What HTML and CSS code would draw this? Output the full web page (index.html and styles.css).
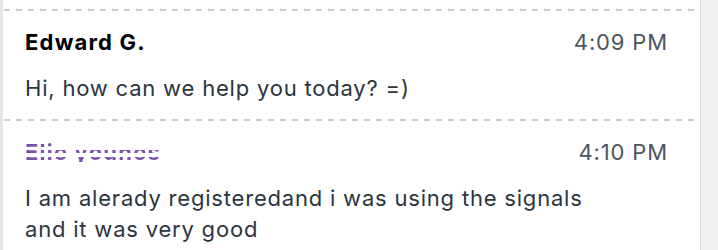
FILE: index.html
```html
<!DOCTYPE html>
<html lang="en">
<head>
<meta charset="utf-8">
<title>Chat</title>
<link rel="stylesheet" href="styles.css">
</head>
<body>
<div class="page">
  <div class="panel">
    <div class="message first">
      <div class="msg-head">
        <span class="author">Edward G.</span>
        <span class="time">4:09 PM</span>
      </div>
      <p class="msg-text">Hi, how can we help you today? =)</p>
    </div>
    <div class="message">
      <div class="msg-head">
        <span class="author author-striped">Elie younes</span>
        <span class="time">4:10 PM</span>
      </div>
      <p class="msg-text">I am alerady registeredand i was using the signals<br>and it was very good</p>
    </div>
  </div>
  <div class="track"></div>
</div>
</body>
</html>
```
FILE: styles.css
```css
html, body {
  margin: 0;
  padding: 0;
  height: 100%;
}
body {
  background: #f0f0f0;
  font-family: Inter, "Liberation Sans", Arial, sans-serif;
  overflow: hidden;
}
.page {
  display: flex;
  height: 250px;
}
.panel {
  width: 697px;
  background: #ffffff;
  border-left: 3px solid #e6e6e6;
  border-right: 1px solid #dedede;
  padding-top: 9px;
  box-sizing: content-box;
}
.track {
  flex: 1;
  background: #f0f0f0;
}
.message {
  padding: 18px 32px 14px 22px;
  background: repeating-linear-gradient(90deg, #cdcdcd 0 6px, transparent 6px 12px) left top / 100% 2px no-repeat;
  background-position: 1px 0;
}
.message.first {
  padding-bottom: 15px;
}
.msg-head {
  display: flex;
  justify-content: space-between;
  align-items: baseline;
  height: 30px;
  line-height: 30px;
  font-size: 22px;
}
.author {
  font-weight: 700;
  color: #000000;
  letter-spacing: 1.2px;
}
.author-striped {
  display: inline-block;
  height: 30px;
  color: transparent;
  background: linear-gradient(to bottom,
    transparent 0, transparent 5px,
    #7a52ab 5px, #7a52ab 10px,
    transparent 10px, transparent 13px,
    #7a52ab 13px, #7a52ab 16px,
    transparent 16px, transparent 20px,
    #7a52ab 20px, #7a52ab 25px,
    transparent 25px);
  -webkit-background-clip: text;
  background-clip: text;
}
.time {
  color: #4a5561;
  font-weight: 400;
  letter-spacing: 0.85px;
}
.msg-text {
  margin: 16px 0 0 0;
  font-size: 22px;
  line-height: 31px;
  color: #2b3540;
  letter-spacing: 0.8px;
}
```
